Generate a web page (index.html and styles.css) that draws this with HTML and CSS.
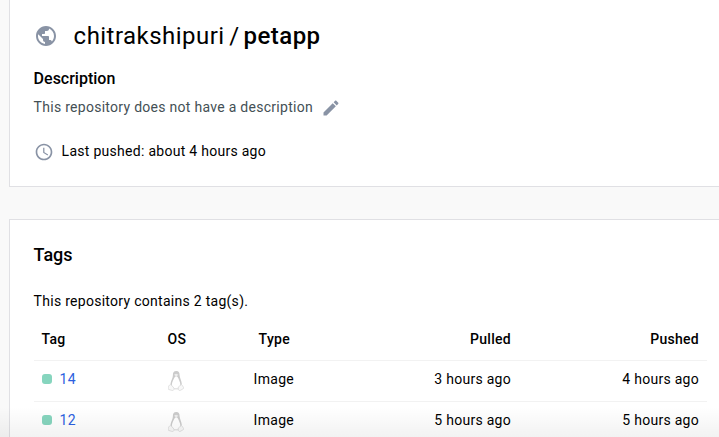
FILE: index.html
```html
<!DOCTYPE html>
<html lang="en">
<head>
<meta charset="utf-8">
<title>chitrakshipuri/petapp</title>
<link rel="stylesheet" href="styles.css">
</head>
<body>
<svg class="defs" width="0" height="0">
  <symbol id="tux" viewBox="0 0 16 20">
    <path d="M8.300 0C5.600 0 4.800 1.800 4.900 4.300C5 7 3 9.300 2.500 12.800L3.500 17.500L7 18.300H10L12.800 17.500L13.800 12.800C13.400 9.300 11.800 7 11.600 4.300C11.600 1.800 11 0 8.300 0Z" fill="#cbcbcb"/>
    <path d="M8.200 5.300C6.300 5.700 6 7.800 4.900 9.700C3.600 12 3.500 15.500 4.800 17.400H11.300C12.700 15.500 12.700 12 11.300 9.700C10.500 8 10.200 5.700 8.200 5.300Z" fill="#fff"/>
    <path d="M6 3.700L8.100 2.800L10.400 3.700L8.300 5.600Z" fill="#eee"/>
    <path d="M2.800 13.400L6 17.100C6.300 19.700 4.500 19.800 3.200 19.200L.7 18.500C-.1 18 .6 16.800 .4 15.300C.6 14.300 2 14.500 2.800 13.400ZM13.200 13.700L10.300 16C9.800 19.600 11.500 20 12.700 19.200L15.400 17.600C16.200 16.800 15.100 16.200 14.800 15.100C14.500 14.100 13.900 14.100 13.200 13.700Z" fill="#f8f8f8" stroke="#dadada" stroke-width=".8"/>
  </symbol>
</svg>
<main class="page">
  <section class="card summary">
    <h1 class="title">
      <svg class="icon globe" viewBox="0 0 24 24"><path d="M12 2C6.480 2 2 6.480 2 12s4.480 10 10 10 10-4.480 10-10S17.520 2 12 2zm-1 17.930c-3.950-.49-7-3.850-7-7.930 0-.62.080-1.210.21-1.790L9 15v1c0 1.100.9 2 2 2v1.930zm6.900-2.540c-.26-.81-1-1.390-1.900-1.390h-1v-3c0-.55-.45-1-1-1H8v-2h2c.55 0 1-.45 1-1V7h2c1.100 0 2-.9 2-2v-.41c2.930 1.190 5 4.060 5 7.410 0 2.080-.8 3.970-2.100 5.390z"/></svg>
      <span class="owner">chitrakshipuri</span><span class="slash">/</span><strong class="repo">petapp</strong>
    </h1>
    <h2 class="subtitle">Description</h2>
    <div class="description">
      <span>This repository does not have a description</span>
      <svg class="icon pencil" viewBox="0 0 24 24"><path d="M3 17.250V21h3.750L17.810 9.940l-3.750-3.750L3 17.250zM20.710 7.040c.39-.39.39-1.020 0-1.410l-2.340-2.340c-.39-.39-1.020-.39-1.410 0l-1.830 1.830 3.750 3.750 1.830-1.830z"/></svg>
    </div>
    <div class="pushed">
      <svg class="icon clock" viewBox="0 0 24 24"><path d="M11.990 2C6.470 2 2 6.480 2 12s4.470 10 9.990 10C17.520 22 22 17.520 22 12S17.520 2 11.990 2zM12 20c-4.420 0-8-3.580-8-8s3.580-8 8-8 8 3.580 8 8-3.580 8-8 8zm.5-13H11v6l5.250 3.150.75-1.230-4.500-2.670z"/></svg>
      <span>Last pushed: about 4 hours ago</span>
    </div>
  </section>
  <section class="card tags">
    <h2 class="tags-title">Tags</h2>
    <p class="count">This repository contains 2 tag(s).</p>
    <div class="table">
      <div class="row head"><span>Tag</span><span>OS</span><span class="type">Type</span><span class="right">Pulled</span><span class="right">Pushed</span></div>
      <div class="row"><a class="tag"><i class="dot"></i>14</a><svg class="tux"><use href="#tux"/></svg><span>Image</span><span class="right">3 hours ago</span><span class="right">4 hours ago</span></div>
      <div class="row"><a class="tag"><i class="dot"></i>12</a><svg class="tux"><use href="#tux"/></svg><span>Image</span><span class="right">5 hours ago</span><span class="right">5 hours ago</span></div>
    </div>
  </section>
</main>
<div class="fade"></div>
</body>
</html>
```
FILE: styles.css
```css
* { box-sizing: border-box; }
body {
  margin: 0;
  height: 437px;
  overflow: hidden;
  background: #f9f9f9;
  color: #000;
  font: 400 14px/20px Roboto, sans-serif;
  letter-spacing: .28px;
  text-indent: -.4px;
}
h1, h2, p { margin: 0; font-weight: 500; }
.defs { display: block; height: 0; }
.page { display: flex; flex-direction: column; gap: 32px; padding-left: 9px; }
.card { background: #fff; border: 1px solid #e0e0e4; border-right: 0; padding-left: 24px; }
.summary { height: 187px; border-top: 0; padding-top: 20px; }
.icon { fill: #8993a5; flex: none; }
.title { display: flex; align-items: center; height: 32px; font-size: 24px; line-height: 32px; font-weight: 400; }
.globe { width: 24px; height: 24px; margin-right: 16px; }
.owner { letter-spacing: .46px; }
.slash { margin: 0 4.500px 0 5px; }
.repo { font-weight: 500; letter-spacing: .48px; }
.subtitle { margin-top: 15px; font-size: 16px; line-height: 24px; letter-spacing: 0; }
.description { display: flex; align-items: center; height: 20px; margin-top: 6px; color: #445055; }
.pencil { width: 20px; height: 20px; margin-left: 8px; margin-top: 2px; }
.pushed { display: flex; align-items: center; height: 20px; margin-top: 24px; }
.clock { width: 20px; height: 20px; margin: 2px 8px 0 0; }
.tags { height: 218px; padding-top: 23px; border-bottom: 0; overflow: hidden; }
.tags-title { font-size: 18px; line-height: 24px; letter-spacing: 0; }
.count { margin-top: 24px; font-weight: 400; }
.table { margin: 7px 12px 0 0; }
.row { display: grid; grid-template-columns: 126px 86px 100px 157px 188px; align-items: center; height: 41px; padding: 0 8px 4px; border-bottom: 1px solid #f2f2f2; }
.head { height: 43px; padding-bottom: 0; font-weight: 500; }
.type { padding-left: 5px; }
.right { text-align: right; }
.tag { display: flex; align-items: center; color: #2c5fe0; }
.dot { width: 10px; height: 10px; margin-right: 8px; border-radius: 3px; background: #86d5be; }
.tux { width: 16px; height: 20px; margin-top: 3px; }
.fade { position: absolute; inset: auto 0 0; height: 30px; background: linear-gradient(transparent, rgba(0, 0, 0, .05)); }
```
